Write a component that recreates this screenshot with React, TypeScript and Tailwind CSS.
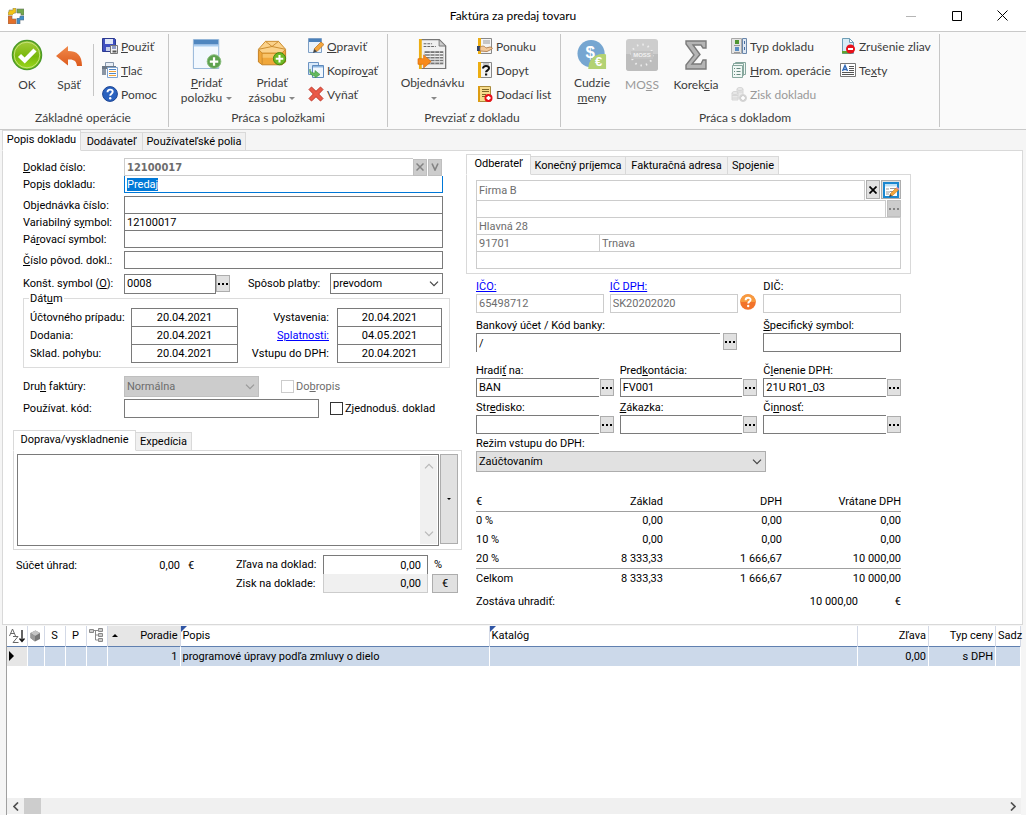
import { useEffect, useRef, type InputHTMLAttributes, type ReactNode } from 'react';
import clsx from 'clsx';

/* ---------- Icons ---------- */

const LogoIcon = () => (
    <svg width="16" height="16" viewBox="0 0 16 16">
        <path d="M1 4V2h4V0h3v5H6v2H0V4z" fill="#f2c416" stroke="#8a8a76" strokeWidth=".6" />
        <path d="M9 1h7v6h-3V5H9z" fill="#74a94c" stroke="#66755e" strokeWidth=".6" />
        <path d="M0 8h4v3h4v5H0z" fill="#e3702b" stroke="#8b6b58" strokeWidth=".6" />
        <path d="M12 8h4v4h-4v4H9v-6h3z" fill="#3f8fcb" stroke="#57707f" strokeWidth=".6" />
        <path d="M5 6h6v4H5z" fill="#fff" />
    </svg>
);

const OkIcon = () => (
    <svg width="32" height="32" viewBox="0 0 32 32">
        <defs>
            <linearGradient id="okFill" x1="0" y1="0" x2="0" y2="1">
                <stop offset="0" stopColor="#a6cc3c" />
                <stop offset=".55" stopColor="#79b80c" />
                <stop offset="1" stopColor="#9ddb1c" />
            </linearGradient>
        </defs>
        <circle cx="16" cy="16" r="14.5" fill="url(#okFill)" stroke="#4c9a2a" strokeWidth="1.5" />
        <circle cx="16" cy="16" r="12.8" fill="none" stroke="#c3e27a" strokeWidth="1" />
        <path d="M8.5 16.5l5.200 5L24 11" fill="none" stroke="#fff" strokeWidth="4.400" />
    </svg>
);

const BackIcon = () => (
    <svg width="32" height="32" viewBox="0 0 32 32">
        <defs>
            <linearGradient id="backFill" x1="0" y1="0" x2="0" y2="1">
                <stop offset="0" stopColor="#f08a4c" />
                <stop offset="1" stopColor="#dd5a1c" />
            </linearGradient>
        </defs>
        <path d="M3 17L15 7v5c9 0 14 4 14 15h-5c-.5-5-3-7-9-6.500v6z" fill="url(#backFill)" />
    </svg>
);

const SaveIcon = () => (
    <svg width="16" height="16" viewBox="0 0 16 16">
        <path d="M.5.5h12l1 1v12H.5z" fill="#3f4fc0" stroke="#2c3a8f" />
        <path d="M3 1h8v5H3z" fill="#dfe6f7" />
        <path d="M4 9h4v4H4z" fill="#c5cde8" />
        <path d="M8.500 7.500h7v8h-7z" fill="#f3f3f3" stroke="#777" />
        <path d="M10 8h4v3h-4z" fill="#8f9cc9" />
        <path d="M10.500 12.500h4v2h-4z" fill="#555" />
    </svg>
);

const PrintIcon = () => (
    <svg width="16" height="16" viewBox="0 0 16 16">
        <path d="M3.500.5h8v4h-8z" fill="#e8eef6" stroke="#8797ac" />
        <path d="M0 4h14v3H0z" fill="#6b7785" />
        <path d="M0 7h4v6H0z" fill="#8a95a3" />
        <path d="M5.500 5.500h10v10h-10z" fill="#fdfdfd" stroke="#7fa3cf" />
        <path d="M7 7.500h7M7 11.500h7" stroke="#4f86c6" />
        <path d="M7 9.500h7M7 13.500h7" stroke="#f0a33a" />
    </svg>
);

const HelpIcon = () => (
    <svg width="16" height="16" viewBox="0 0 16 16">
        <circle cx="8" cy="8" r="7.400" fill="#2a62bf" stroke="#1c4593" />
        <path d="M5.500 6.200c0-3.600 5.200-3.200 5.200-.4 0 1.800-2.500 1.900-2.500 3.900" fill="none" stroke="#fff" strokeWidth="1.900" />
        <circle cx="8.200" cy="12.200" r="1.200" fill="#fff" />
    </svg>
);

const AddItemIcon = () => (
    <svg width="32" height="32" viewBox="0 0 32 32">
        <path d="M1.500.5h27v31h-27z" fill="#f2f8fe" stroke="#8fb2d6" />
        <path d="M2 1h26v5H2z" fill="#4f86bf" />
        <path d="M2 6h26v2H2z" fill="#a9cdf0" />
        <circle cx="23.500" cy="24" r="7.300" fill="#5da24f" stroke="#8bbd80" />
        <path d="M23.500 19.500v9M19 24h9" stroke="#fff" strokeWidth="2.400" />
    </svg>
);

const AddStockIcon = () => (
    <svg width="32" height="32" viewBox="0 0 32 32">
        <path d="M1.500 12v12.500l4 3h21l4-3V12z" fill="#f0a73a" stroke="#c27d1f" />
        <path d="M1.500 11L9 2.500h14l7.500 8.500-4 4h-21z" fill="#fbd28a" stroke="#c98a2c" />
        <path d="M9 2.500l7 5.500 7-5.500M1.500 11L16 8l14.500 3M5.500 15v12" fill="none" stroke="#c98a2c" />
        <path d="M6 16h20v4H6z" fill="#f8c368" />
        <circle cx="24" cy="21" r="6.500" fill="#6fba25" stroke="#3d8410" />
        <path d="M24 17v8M20 21h8" stroke="#fff" strokeWidth="2.200" />
    </svg>
);

const EditIcon = () => (
    <svg width="16" height="16" viewBox="0 0 16 16">
        <path d="M.5.5h13v14H.5z" fill="#eaf3fc" stroke="#7d9fc5" />
        <path d="M1 1h12v3H1z" fill="#4a80ba" />
        <path d="M6 11l7-7 3 2.500-7 7z" fill="#f3a63d" stroke="#b8701c" strokeWidth=".7" />
        <path d="M6 11l3 2.500-4 1.500z" fill="#444" />
    </svg>
);

const CopyIcon = () => (
    <svg width="16" height="16" viewBox="0 0 16 16">
        <path d="M.5.5h10v12H.5z" fill="#d9e9f9" stroke="#6b93c2" />
        <path d="M4.500 3.500h11v12h-11z" fill="#f1f7fd" stroke="#5e8abd" />
        <path d="M5 4h10v1.500H5z" fill="#8db5de" />
        <path d="M2 7c0 3 2 4 5 4V8.500l5 4-5 3.500v-2c-4 0-6-3-5-7z" fill="#64b95e" stroke="#3f9440" strokeWidth=".6" />
    </svg>
);

const RemoveIcon = () => (
    <svg width="16" height="16" viewBox="0 0 16 16">
        <path d="M3.500 1L8 5.300 12.500 1 15 3.500 10.700 8l4.300 4.500-2.500 2.500L8 10.700 3.500 15 1 12.500 5.300 8 1 3.500z" fill="#ea5a48" stroke="#c23a2c" />
    </svg>
);

const OrderIcon = () => (
    <svg width="32" height="32" viewBox="0 0 32 32">
        <path d="M2.500.5h20l7 7v24h-27z" fill="#f0f0f0" stroke="#777" strokeWidth="1.400" />
        <path d="M22.500.5v7h7z" fill="#ccc" stroke="#777" />
        <path d="M1 0h3v32H1z" fill="#edae12" />
        <path d="M6 5h9M6 8h13" stroke="#666" strokeWidth="1.200" strokeDasharray="3 1" />
        <path d="M7 13h20v14H7z" fill="#777" />
        <path d="M7 15.500h20M7 18.500h20M7 21.500h20M7 24.500h20" stroke="#f4f4f4" strokeWidth="1.300" />
        <path d="M13 13v14M18 13v14M23 13v14" stroke="#ddd" strokeWidth=".8" />
        <path d="M0 21h6v-4l8 7-8 7v-4H0z" fill="#f88a1a" stroke="#d86a08" strokeWidth=".7" />
    </svg>
);

const OfferIcon = () => (
    <svg width="16" height="16" viewBox="0 0 16 16">
        <path d="M1.500.5h13v15h-13z" fill="#f4f4f4" stroke="#888" />
        <path d="M1 0h3v16H1z" fill="#edae12" />
        <path d="M6 3h7M6 5h7" stroke="#999" />
        <path d="M0 8h3v5H0z" fill="#2c4169" />
        <path d="M3 9c4-2 5 0 6 1l4-1c1.500 0 3 1 2 2l-5 2.500-7-.5z" fill="#f3c99a" stroke="#a36f3b" strokeWidth=".8" />
    </svg>
);

const DemandIcon = () => (
    <svg width="16" height="16" viewBox="0 0 16 16">
        <path d="M1.500.5h13v15h-13z" fill="#f4f4f4" stroke="#888" />
        <path d="M1 0h3v16H1z" fill="#edae12" />
        <path d="M6 2h6" stroke="#999" />
        <path d="M6 6.500C6 3 12 3.500 12 6.300c0 2-3 2-3 4" fill="none" stroke="#111" strokeWidth="2" />
        <path d="M8 11.500h2.200v2H8z" fill="#111" />
    </svg>
);

const DeliveryIcon = () => (
    <svg width="16" height="16" viewBox="0 0 16 16">
        <path d="M1.500.5h12v15h-12z" fill="#f8dc8c" stroke="#a98a3b" />
        <path d="M1 0h2v16H1z" fill="#dd9c12" />
        <path d="M5 3.500h7M5 5.500h7M5 8.500h4M5 10.500h3" stroke="#7d6628" />
        <circle cx="11.500" cy="12" r="4" fill="#e8101a" />
        <path d="M11.500 10v4M9.500 12h4" stroke="#fff" strokeWidth="1.800" />
    </svg>
);

const CurrencyIcon = () => (
    <svg width="32" height="32" viewBox="0 0 32 32" fontFamily="Liberation Sans" fontWeight="700" fill="#fff" textAnchor="middle">
        <circle cx="15" cy="15.500" r="14.500" fill="#76a6d1" />
        <text x="14" y="20" fontSize="18">$</text>
        <path d="M12 32c0-9 6-16 15-16 2 0 3 0 4 .5V32z" fill="#b3d273" />
        <text x="23" y="29" fontSize="14">€</text>
    </svg>
);

const MossIcon = () => (
    <svg width="32" height="32" viewBox="0 0 32 32">
        <rect width="32" height="32" rx="3" fill="#cdcdcd" />
        <path d="M0 15h32v14q0 3-3 3H3q-3 0-3-3z" fill="#bdbdbd" />
        <circle cx="16" cy="16" r="10.500" fill="none" stroke="#ededed" strokeWidth="2" strokeDasharray="1.500 4" />
        <path d="M5 12h22v8H5z" fill="#c3c3c3" />
        <text x="16" y="18" fontSize="6" fontWeight="700" fill="#f1f1f1" textAnchor="middle" fontFamily="Liberation Sans">MOSS</text>
    </svg>
);

const SigmaIcon = () => (
    <svg width="32" height="32" viewBox="0 0 32 32">
        <path d="M6 2h20v7h-3l-2-3h-8l7 9.500L12 25h9l2-4h3v9H6v-4l8-10L6 5z" fill="#b5b5b5" stroke="#7b7b7b" strokeWidth="1.400" />
    </svg>
);

const DocTypeIcon = () => (
    <svg width="16" height="16" viewBox="0 0 16 16">
        <path d="M.5.500h10v15H.5z" fill="#e4e4e4" stroke="#a9a9a9" />
        <path d="M4 2h4v4H4z" fill="#4f9530" />
        <path d="M4 9h4v4H4z" fill="#5a8ec4" />
        <path d="M3 7.500h6M3 14.500h6" stroke="#999" />
        <path d="M11.500.500h4v15h-4z" fill="#dfe8f3" stroke="#6a87ab" />
        <path d="M13.500 3v3M13.500 9v3" stroke="#476ea0" />
    </svg>
);

const BulkIcon = () => (
    <svg width="16" height="16" viewBox="0 0 16 16" fill="#f0f7f4" stroke="#86a79d">
        <path d="M4.500.500h10v12h-10z" />
        <path d="M2.500 1.500h10v12h-10z" />
        <path d="M1.500 3.500h10v12h-10z" />
        <path d="M3 6.500h1M5.500 6.500h4M3 9.500h1M5.500 9.500h4M3 12.500h1M5.500 12.500h4" stroke="#66887e" />
    </svg>
);

const ProfitIcon = () => (
    <svg width="16" height="16" viewBox="0 0 16 16" fill="#e9e9e9" stroke="#d6d6d6">
        <path d="M6 3v9h6V3z" />
        <ellipse cx="9" cy="3" rx="3" ry="1.500" />
        <path d="M1 7v7h6V7z" />
        <ellipse cx="4" cy="7" rx="3" ry="1.500" />
        <path d="M1 9.500h6M1 12h6M6 6h6" />
        <circle cx="12" cy="12" r="3.500" fill="#d0d0d0" />
        <path d="M12 10v4M10 12h4" stroke="#fff" strokeWidth="1.500" />
    </svg>
);

const NoDiscountIcon = () => (
    <svg width="16" height="16" viewBox="0 0 16 16">
        <path d="M2.500.500h7l4 4v11h-11z" fill="#d8ebf5" stroke="#6d9db5" />
        <path d="M9.500.500v4h4z" fill="#fff" stroke="#6d9db5" />
        <path d="M2 13h9v2.500H2z" fill="#5fa32f" />
        <circle cx="10.500" cy="11" r="4.500" fill="#e8101a" />
        <path d="M8 11h5" stroke="#fff" strokeWidth="2" />
    </svg>
);

const TextsIcon = () => (
    <svg width="16" height="16" viewBox="0 0 16 16">
        <path d="M.500 1.500h15v13H.500z" fill="#fff" stroke="#777" />
        <path d="M2.500 9L5 3.500 7.500 9M3.500 7.500h3" fill="none" stroke="#2c66b5" strokeWidth="1.400" />
        <path d="M9 4.500h5M9 6.500h5M9 8.500h5M2 10.500h12M2 12.500h12" stroke="#555" />
    </svg>
);

const FormEditIcon = () => (
    <svg width="16" height="16" viewBox="0 0 16 16" className="shrink-0">
        <path d="M1 1h14v14H1z" fill="#fff" stroke="#1b87cf" strokeWidth="2" />
        <path d="M2 2h12v2.500H2z" fill="#bfe0f5" />
        <path d="M3 7h3M7 6.500h6v3H7M3 10h4M3 12h3" fill="none" stroke="#999" />
        <path d="M7 12l6-6 2.500 2-6.500 6z" fill="#f3a63d" stroke="#c27d1f" strokeWidth=".6" />
        <path d="M13 6l1-1 2.500 2-1 1z" fill="#e289b4" />
        <path d="M6 15l1-3 2 2z" fill="#444" />
    </svg>
);

const InfoIcon = () => (
    <svg width="16" height="16" viewBox="0 0 16 16" className="shrink-0">
        <circle cx="8" cy="8" r="7.800" fill="#f2732b" />
        <path d="M8 .200a7.800 7.800 0 017.800 7.800H.200A7.800 7.800 0 018 .200z" fill="#f79a3f" />
        <path d="M5.600 6.200c0-3.400 5-3 5-.4 0 1.700-2.400 1.800-2.400 3.700" fill="none" stroke="#fff" strokeWidth="1.900" />
        <circle cx="8.200" cy="12" r="1.200" fill="#fff" />
    </svg>
);

const Chevron = ({ className }: { className?: string }) => (
    <svg width="10" height="6" viewBox="0 0 10 6" className={className}>
        <path d="M1 .7l4 4 4-4" fill="none" stroke="currentColor" strokeWidth="1.200" />
    </svg>
);

/* ---------- Ribbon ---------- */

function BigButton({ icon, className, disabled, children }: { icon: ReactNode; className?: string; disabled?: boolean; children: ReactNode }) {
    return (
        <button disabled={disabled} className={clsx('flex flex-col items-center pt-[5px] shrink-0 leading-[15px] whitespace-nowrap disabled:text-[#999]', className)}>
            {icon}
            <span className="mt-[6px]">{children}</span>
        </button>
    );
}

function SmallButton({ icon, disabled, children }: { icon: ReactNode; disabled?: boolean; children: ReactNode }) {
    return (
        <button disabled={disabled} className="flex h-6 items-center gap-[3px] whitespace-nowrap disabled:text-[#999]">
            {icon}
            <span>{children}</span>
        </button>
    );
}

function RibbonGroup({ title, className, children }: { title: string; className: string; children: ReactNode }) {
    return (
        <section className={clsx('flex shrink-0 flex-col border-r border-[#c6c6c6]', className)}>
            <div className="flex h-[71px]">{children}</div>
            <h2 className="mt-1 text-center leading-[18px]">{title}</h2>
        </section>
    );
}

const DropMark = () => <span className="ml-1 inline-block border-x-[3px] border-t-[3px] border-x-transparent border-t-[#888] align-middle" />;

function Ribbon() {
    return (
        <div className="flex overflow-hidden border-y border-[#c9c9c9] bg-[#fafafa] pt-[2px] pb-0.5 pl-0.5 font-['Lato','Open_Sans',sans-serif] text-[12px] text-[#3c3c3c]">
            <RibbonGroup title="Základné operácie" className="w-[167px] pr-1">
                <BigButton icon={<OkIcon />} className="w-[50px]">OK</BigButton>
                <BigButton icon={<BackIcon />} className="w-[34px]">Späť</BigButton>
                <div className="mr-2 ml-[7px] mt-[10px] h-[52px] w-px bg-[#c6c6c6]" />
                <div>
                    <SmallButton icon={<SaveIcon />}><u>P</u>oužiť</SmallButton>
                    <SmallButton icon={<PrintIcon />}><u>T</u>lač</SmallButton>
                    <SmallButton icon={<HelpIcon />}>Pomoc</SmallButton>
                </div>
            </RibbonGroup>
            <RibbonGroup title="Práca s položkami" className="w-[219px] pr-1 pl-1">
                <BigButton icon={<AddItemIcon />} className="w-[67px]"><u>P</u>ridať<br />položku<DropMark /></BigButton>
                <BigButton icon={<AddStockIcon />} className="w-[64px]">Pridať<br />zásobu<DropMark /></BigButton>
                <div className="ml-1">
                    <SmallButton icon={<EditIcon />}><u>O</u>praviť</SmallButton>
                    <SmallButton icon={<CopyIcon />}>Kopíro<u>v</u>ať</SmallButton>
                    <SmallButton icon={<RemoveIcon />}>Vyňať</SmallButton>
                </div>
            </RibbonGroup>
            <RibbonGroup title="Prevziať z dokladu" className="w-[173px] pr-1">
                <BigButton icon={<OrderIcon />} className="w-[89px]">Objednávku<br /><DropMark /></BigButton>
                <div>
                    <SmallButton icon={<OfferIcon />}>Ponuku</SmallButton>
                    <SmallButton icon={<DemandIcon />}>Dopyt</SmallButton>
                    <SmallButton icon={<DeliveryIcon />}>Dodací list</SmallButton>
                </div>
            </RibbonGroup>
            <RibbonGroup title="Práca s dokladom" className="w-[379px] pr-4 pl-[6px]">
                <BigButton icon={<CurrencyIcon />} className="w-[50px]">Cudzie<br /><u>m</u>eny</BigButton>
                <BigButton icon={<MossIcon />} className="w-[50px]" disabled>MO<u>S</u>S</BigButton>
                <BigButton icon={<SigmaIcon />} className="w-[58px]">Korek<u>c</u>ia</BigButton>
                <div className="ml-[6px] w-[109px] shrink-0">
                    <SmallButton icon={<DocTypeIcon />}>Typ dokladu</SmallButton>
                    <SmallButton icon={<BulkIcon />}><u>H</u>rom. operácie</SmallButton>
                    <SmallButton icon={<ProfitIcon />} disabled>Zisk dokladu</SmallButton>
                </div>
                <div>
                    <SmallButton icon={<NoDiscountIcon />}>Zrušenie zliav</SmallButton>
                    <SmallButton icon={<TextsIcon />}>Te<u>x</u>ty</SmallButton>
                </div>
            </RibbonGroup>
        </div>
    );
}

/* ---------- Form controls ---------- */

function Tabs({ items }: { items: { label: string; width: string }[] }) {
    return (
        <div role="tablist" className="relative z-10 -mb-px flex h-[21px] items-end">
            {items.map((item, i) => (
                <button
                    key={item.label}
                    role="tab"
                    aria-selected={i === 0}
                    className={clsx(
                        'border border-[#d9d9d9] whitespace-nowrap',
                        item.width,
                        i === 0 ? 'h-[21px] border-b-white bg-white pb-0.5' : 'h-[19px] border-l-0 bg-[#f0f0f0]',
                    )}
                >
                    {item.label}
                </button>
            ))}
        </div>
    );
}

function TextInput({ className, ...rest }: InputHTMLAttributes<HTMLInputElement>) {
    return <input className={clsx('min-w-0 border px-0.5 outline-none', rest.disabled ? 'border-[#cccccc] bg-white text-[#6d6d6d]' : 'border-[#7a7a7a] bg-white', className)} {...rest} />;
}

function Dots({ label, disabled }: { label: string; disabled?: boolean }) {
    return (
        <button
            aria-label={label}
            disabled={disabled}
            className={clsx('flex h-[17px] w-[14px] shrink-0 items-center justify-center gap-0.5 border', disabled ? 'border-[#bfbfbf] bg-[#cccccc] text-[#838383]' : 'border-[#adadad] bg-[#e1e1e1] text-black')}
        >
            <i className="size-0.5 bg-current" />
            <i className="size-0.5 bg-current" />
            <i className="size-0.5 bg-current" />
        </button>
    );
}

function Select({ id, value, className, arrow, disabled }: { id: string; value: string; className?: string; arrow?: string; disabled?: boolean }) {
    return (
        <div className={clsx('relative', className)}>
            <select id={id} disabled={disabled} className="size-full appearance-none border border-inherit bg-inherit px-0.5 opacity-100 outline-none">
                <option>{value}</option>
            </select>
            <Chevron className={clsx('pointer-events-none absolute top-2 right-1', arrow ?? 'text-[#444]')} />
        </div>
    );
}

function FormRow({ id, label, className, children }: { id: string; label: ReactNode; className?: string; children: ReactNode }) {
    return (
        <div className={clsx('flex items-center', className)}>
            <label htmlFor={id} className="w-[101px] shrink-0 whitespace-nowrap">{label}</label>
            {children}
        </div>
    );
}

function DateStack({ rows, labelWidth, inputWidth }: { rows: { id: string; label: ReactNode; value: string }[]; labelWidth: string; inputWidth: string }) {
    return (
        <div>
            {rows.map((row) => (
                <div key={row.id} className="-mt-px flex h-[19px] items-center">
                    <label htmlFor={row.id} className={clsx('whitespace-nowrap', labelWidth)}>{row.label}</label>
                    <TextInput id={row.id} defaultValue={row.value} className={clsx('h-[19px] text-center', inputWidth)} />
                </div>
            ))}
        </div>
    );
}

/* ---------- Left half ---------- */

function DocumentForm() {
    const nameRef = useRef<HTMLInputElement>(null);

    useEffect(() => {
        nameRef.current?.focus();
        nameRef.current?.select();
    }, []);

    return (
        <div className="w-[459px] shrink-0 pt-[7px] pl-[10px]">
            <div className="pl-[10px]">
                <FormRow id="docNo" label={<><u>D</u>oklad číslo:</>} className="h-[18px]">
                    <TextInput id="docNo" disabled defaultValue="12100017" className="h-[18px] w-[289px] border-r-0 font-['DejaVu_Sans_Condensed','DejaVu_Sans',sans-serif] font-bold" />
                    <button disabled aria-label="Vymazať" className="flex h-[17px] w-[14px] items-center justify-center border border-[#bfbfbf] bg-[#cccccc] text-[#838383]">
                        <svg width="8" height="8" viewBox="0 0 8 8"><path d="M.500.500l7 7M7.500.500l-7 7" stroke="currentColor" strokeWidth="1.500" /></svg>
                    </button>
                    <button disabled aria-label="Vybrať" className="ml-px flex h-[17px] w-[14px] items-center justify-center border border-[#bfbfbf] bg-[#cccccc] text-[#838383]">
                        <svg width="8" height="8" viewBox="0 0 8 8"><path d="M1 .500L4 7l3-6.500" fill="none" stroke="currentColor" strokeWidth="1.600" /></svg>
                    </button>
                </FormRow>
                <FormRow id="docName" label={<>Pop<u>i</u>s dokladu:</>} className="h-[17px]">
                    <input ref={nameRef} id="docName" defaultValue="Predaj" className="h-[17px] w-[319px] border border-t-0 border-[#0078d7] px-0.5 outline-none selection:bg-[#0078d7] selection:text-white" />
                </FormRow>
                <FormRow id="orderNo" label={<>Ob<u>j</u>ednávka číslo:</>} className="mt-[3px] h-[18px]">
                    <TextInput id="orderNo" className="h-[18px] w-[319px]" />
                </FormRow>
                <FormRow id="varSym" label={<>Variabilný s<u>y</u>mbol:</>} className="-mt-px h-[18px]">
                    <TextInput id="varSym" defaultValue="12100017" className="h-[18px] w-[319px]" />
                </FormRow>
                <FormRow id="pairSym" label={<>Pá<u>r</u>ovací symbol:</>} className="-mt-px h-[18px]">
                    <TextInput id="pairSym" className="h-[18px] w-[319px]" />
                </FormRow>
                <FormRow id="origNo" label={<><u>Č</u>íslo pôvod. dokl.:</>} className="mt-[3px] h-[18px]">
                    <TextInput id="origNo" className="h-[18px] w-[319px]" />
                </FormRow>
                <FormRow id="constSym" label={<>Konšt. symbol (<u>O</u>):</>} className="mt-1 h-[21px]">
                    <TextInput id="constSym" defaultValue="0008" className="h-5 w-[92px]" />
                    <Dots label="Vybrať konštantný symbol" />
                    <label htmlFor="payment" className="ml-[18px] w-[82px] whitespace-nowrap">Spôsob platby:</label>
                    <Select id="payment" value="prevodom" className="h-[21px] w-[113px] border-[#7a7a7a] bg-white" />
                </FormRow>
            </div>

            <fieldset className="relative mt-1 ml-[10px] flex h-[70px] w-[427px] justify-between border border-[#dcdcdc] pt-[10px] pr-[7px] pl-[6px]">
                <legend className="absolute -top-[7px] left-[5px] bg-white px-px leading-[14px]">Dát<u>u</u>m</legend>
                <DateStack
                    labelWidth="w-[101px]"
                    inputWidth="w-[107px]"
                    rows={[
                        { id: 'd1', label: 'Účtovného prípadu:', value: '20.04.2021' },
                        { id: 'd2', label: 'Dodania:', value: '20.04.2021' },
                        { id: 'd3', label: 'Sklad. pohybu:', value: '20.04.2021' },
                    ]}
                />
                <DateStack
                    labelWidth="w-[86px] pr-[8px] text-right"
                    inputWidth="w-[105px]"
                    rows={[
                        { id: 'd4', label: 'Vystavenia:', value: '20.04.2021' },
                        { id: 'd5', label: <a href="#splatnost" className="text-[#0000ff] underline">Splatnosti:</a>, value: '04.05.2021' },
                        { id: 'd6', label: 'Vstupu do DPH:', value: '20.04.2021' },
                    ]}
                />
            </fieldset>

            <div className="mt-2 pl-[10px]">
                <FormRow id="kind" label={<>Dru<u>h</u> faktúry:</>} className="h-[21px]">
                    <Select id="kind" value="Normálna" disabled arrow="text-[#999]" className="h-[21px] w-[135px] border-[#bfbfbf] bg-[#cccccc] text-[#6d6d6d]" />
                    <label className="ml-[22px] flex items-center gap-0.5 text-[#6d6d6d]">
                        <input type="checkbox" disabled className="size-[13px] appearance-none border border-[#cccccc] bg-white" />
                        <span>Do<u>b</u>ropis</span>
                    </label>
                </FormRow>
                <FormRow id="userCode" label="Používat. kód:" className="mt-0.5 h-[19px]">
                    <TextInput id="userCode" className="h-[19px] w-[195px]" />
                    <label className="ml-[11px] flex items-center gap-0.5">
                        <input type="checkbox" className="size-[13px] appearance-none border border-[#333] bg-white" />
                        Zjednoduš. doklad
                    </label>
                </FormRow>
            </div>

            <div className="mt-3 w-[449px]">
                <Tabs items={[{ label: 'Doprava/vyskladnenie', width: 'w-[123px]' }, { label: 'Expedícia', width: 'w-[56px]' }]} />
                <div className="flex gap-px border border-[#d9d9d9] p-[3px]">
                    <div className="flex h-[92px] flex-1 border border-[#7a7a7a] p-px">
                        <textarea aria-label="Doprava/vyskladnenie" className="flex-1 resize-none outline-none" />
                        <div className="flex w-[17px] flex-col items-center justify-between bg-[#f0f0f0] py-[7px] text-[#b8b8b8]">
                            <Chevron className="rotate-180" />
                            <Chevron />
                        </div>
                    </div>
                    <button aria-label="Ďalšie možnosti" className="flex h-[90px] w-[18px] items-center justify-center border border-[#adadad] bg-[#e1e1e1]">
                        <span className="border-x-2 border-t-2 border-x-transparent border-t-black" />
                    </button>
                </div>
            </div>

            <div className="mt-[5px] flex pl-[3px]">
                <div className="flex h-5 w-[220px] items-center">
                    <span className="w-[116px]">Súčet úhrad:</span>
                    <output className="w-12 text-right">0,00</output>
                    <span className="ml-2">€</span>
                </div>
                <div>
                    <div className="flex h-[19px] items-center">
                        <label htmlFor="discount" className="w-[87px]">Zľava na doklad:</label>
                        <TextInput id="discount" defaultValue="0,00" className="h-[19px] w-[105px] border-b-0 px-[6px] text-right" />
                        <span className="ml-[6px]">%</span>
                    </div>
                    <div className="flex h-[19px] items-center">
                        <label htmlFor="profit" className="w-[87px]">Zisk na doklade:</label>
                        <input id="profit" readOnly defaultValue="0,00" className="h-[19px] w-[105px] border border-t-0 border-[#cccccc] bg-[#f0f0f0] px-[6px] text-right outline-none" />
                        <button className="ml-1 h-[19px] w-[26px] border border-[#adadad] bg-[#e1e1e1]">€</button>
                    </div>
                </div>
            </div>
        </div>
    );
}

/* ---------- Right half ---------- */

const pickers = [
    { id: 'payTo', label: <>Hradi<u>ť</u> na:</>, value: 'BAN' },
    { id: 'precont', label: <>Pred<u>k</u>ontácia:</>, value: 'FV001' },
    { id: 'vatClass', label: <>Č<u>l</u>enenie DPH:</>, value: '21U R01_03' },
    { id: 'center', label: <>Str<u>e</u>disko:</>, value: '' },
    { id: 'job', label: <><u>Z</u>ákazka:</>, value: '' },
    { id: 'activity', label: <>Či<u>n</u>nosť:</>, value: '' },
];

const vatRows = [
    ['0 %', '0,00', '0,00', '0,00'],
    ['10 %', '0,00', '0,00', '0,00'],
    ['20 %', '8 333,33', '1 666,67', '10 000,00'],
];

function CustomerForm() {
    return (
        <div className="max-w-[449px] flex-1 pt-[3px] pl-1">
            <Tabs
                items={[
                    { label: 'Odberateľ', width: 'w-[65px]' },
                    { label: 'Konečný príjemca', width: 'w-[95px]' },
                    { label: 'Fakturačná adresa', width: 'w-[102px]' },
                    { label: 'Spojenie', width: 'w-[51px]' },
                ]}
            />
            <div className="border border-[#d9d9d9] px-[9px] pt-[5px] pb-1">
                <div className="flex h-[21px] items-start gap-px">
                    <TextInput aria-label="Firma" disabled defaultValue="Firma B" className="h-[21px] flex-1" />
                    <button aria-label="Vymazať" className="flex h-[19px] w-[14px] items-center justify-center border border-[#adadad] bg-[#e1e1e1]">
                        <svg width="8" height="8" viewBox="0 0 8 8"><path d="M.500.500l7 7M7.500.500l-7 7" stroke="#000" strokeWidth="1.700" /></svg>
                    </button>
                    <button aria-label="Upraviť firmu" className="flex h-[19px] w-5 items-center justify-center border border-[#adadad] bg-[#e1e1e1]"><FormEditIcon /></button>
                </div>
                <div className="-mt-px flex h-[18px] gap-px">
                    <TextInput aria-label="Kontakt" disabled className="flex-1" />
                    <Dots label="Vybrať kontakt" disabled />
                </div>
                <TextInput aria-label="Ulica" disabled defaultValue="Hlavná 28" className="-mt-px block h-[18px] w-full" />
                <div className="-mt-px flex h-[18px]">
                    <TextInput aria-label="PSČ" disabled defaultValue="91701" className="w-[123px] border-r-0" />
                    <TextInput aria-label="Mesto" disabled defaultValue="Trnava" className="flex-1" />
                </div>
                <TextInput aria-label="Štát" disabled className="-mt-px block h-[18px] w-full" />
            </div>

            <div className="mt-[5px] mr-[10px] ml-[10px]">
                <div className="grid grid-cols-3 gap-x-[6px]">
                    <div>
                        <label htmlFor="ico" className="block leading-[15px]"><a href="#ico" className="text-[#0000ff] underline">IČO:</a></label>
                        <TextInput id="ico" disabled defaultValue="65498712" className="block h-[19px] w-[128px]" />
                    </div>
                    <div className="-ml-[10px]">
                        <label htmlFor="icdph" className="block leading-[15px]"><a href="#icdph" className="text-[#0000ff] underline">IČ DPH:</a></label>
                        <div className="flex gap-0.5">
                            <TextInput id="icdph" disabled defaultValue="SK20202020" className="h-[19px] w-[128px]" />
                            <InfoIcon />
                        </div>
                    </div>
                    <div>
                        <label htmlFor="dic" className="block leading-[15px]">DIČ:</label>
                        <TextInput id="dic" disabled className="block h-[19px] w-full" />
                    </div>
                    <div className="col-span-2 mt-[5px]">
                        <label htmlFor="bank" className="block leading-[15px]">Bankový účet / Kód banky:</label>
                        <div className="flex pr-5">
                            <TextInput id="bank" defaultValue="/" className="mr-[3px] h-[19px] flex-1 border-r-0 border-b-0" />
                            <Dots label="Vybrať účet" />
                        </div>
                    </div>
                    <div className="mt-[5px]">
                        <label htmlFor="specSym" className="block leading-[15px]"><u>Š</u>pecifický symbol:</label>
                        <TextInput id="specSym" className="block h-[19px] w-full" />
                    </div>
                </div>

                <div className="mt-[11px] grid grid-cols-3 gap-x-[6px] gap-y-[3px]">
                    {pickers.map((p) => (
                        <div key={p.id}>
                            <label htmlFor={p.id} className="block leading-[15px]">{p.label}</label>
                            <div className="flex items-center gap-px">
                                <TextInput id={p.id} defaultValue={p.value} className="h-[19px] flex-1 border-r-0" />
                                <Dots label="Vybrať" />
                            </div>
                        </div>
                    ))}
                </div>

                <label htmlFor="vatMode" className="mt-[2px] block leading-[15px]">Režim vstupu do DPH:</label>
                <Select id="vatMode" value="Zaúčtovaním" className="h-[21px] w-[290px] border-[#adadad] bg-[#e1e1e1]" />

                <table className="mt-5 w-full text-right">
                    <thead>
                        <tr className="h-[19px] border-b border-[#a0a0a0]">
                            <th className="w-[60px] text-left font-normal">€</th>
                            <th className="font-normal">Základ</th>
                            <th className="w-[119px] font-normal">DPH</th>
                            <th className="w-[119px] font-normal">Vrátane DPH</th>
                        </tr>
                    </thead>
                    <tbody>
                        {vatRows.map((row) => (
                            <tr key={row[0]} className="h-[19px]">
                                {row.map((cell, i) => (
                                    <td key={i} className={i === 0 ? 'text-left' : ''}>{cell}</td>
                                ))}
                            </tr>
                        ))}
                    </tbody>
                    <tfoot>
                        <tr className="h-[21px] border-t border-[#a0a0a0]">
                            <td className="text-left">Celkom</td>
                            <td>8 333,33</td>
                            <td>1 666,67</td>
                            <td>10 000,00</td>
                        </tr>
                    </tfoot>
                </table>
                <div className="mt-[3px] flex h-[19px] items-center">
                    <span className="flex-1">Zostáva uhradiť:</span>
                    <output>10 000,00</output>
                    <span className="w-[43px] text-right">€</span>
                </div>
            </div>
        </div>
    );
}

/* ---------- Items grid ---------- */

const ColumnMark = () => <span className="absolute top-0 left-0 border-t-[6px] border-r-[6px] border-t-[#2f55a4] border-r-transparent" />;

function ItemsGrid() {
    return (
        <div className="flex flex-1 flex-col border-l border-[#a0a0a0] bg-white">
            <table className="w-full table-fixed">
                <thead>
                    <tr className="h-[20px] border-b border-[#6080b0] [&>th]:relative [&>th]:border-r [&>th]:border-[#d3d9e6] [&>th]:px-0.5 [&>th]:py-0 [&>th]:font-normal [&>th]:whitespace-nowrap">
                        <th className="w-5">
                            <svg width="16" height="16" viewBox="0 0 16 16" fill="none" stroke="#666" aria-label="Zoradiť">
                                <path d="M.500 8L3.500 1l3 7M1.500 5.500h4M4 8.500h5l-5 6h5.500" />
                                <path d="M13 2v11M10.500 10.500l2.500 3 2.500-3" stroke="#111" strokeWidth="1.300" />
                            </svg>
                        </th>
                        <th className="w-[17px]">
                            <svg width="11" height="12" viewBox="0 0 11 12" className="mx-auto" aria-label="Stav">
                                <path d="M5.500.500L10 3v6l-5 2.500L.500 8V3z" fill="#777" />
                                <path d="M5.500.500L10 3 5 6 .500 3z" fill="#c4c4c4" />
                                <path d="M5 6v5.500L.500 8V3z" fill="#999" />
                            </svg>
                        </th>
                        <th className="w-[21px]">S</th>
                        <th className="w-[21px]">P</th>
                        <th className="w-[21px]">
                            <svg width="15" height="15" viewBox="0 0 15 15" fill="#ccc" stroke="#888" aria-label="Strom">
                                <path d="M.500 1.500h4v3h-4zM9.500.500h4v3h-4zM9.500 5.500h4v3h-4zM9.500 10.500h4v3h-4z" />
                                <path d="M4.500 2.500h5M6.500 2.500v9.500h3M6.500 7h3" fill="none" />
                            </svg>
                        </th>
                        <th className="w-[73px] bg-[#e6e6e6] text-right">
                            <span className="absolute top-2 left-1 border-x-[3px] border-b-[3px] border-x-transparent border-b-black" />
                            Poradie
                        </th>
                        <th className="w-[309px] text-left"><ColumnMark />Popis</th>
                        <th className="text-left"><ColumnMark />Katalóg</th>
                        <th className="w-[71px] text-right">Zľava</th>
                        <th className="w-[67px] text-right">Typ ceny</th>
                        <th className="w-[25px] text-left">Sadz</th>
                    </tr>
                </thead>
                <tbody>
                    <tr className="h-[20px] bg-[#ccd9ea] [&>td]:border-r [&>td]:border-white [&>td]:px-0.5">
                        <td className="bg-[#e6e6e6]">
                            <svg width="5" height="10" viewBox="0 0 5 10"><path d="M0 0l5 5-5 5z" /></svg>
                        </td>
                        <td />
                        <td />
                        <td />
                        <td />
                        <td className="text-right">1</td>
                        <td>programové úpravy podľa zmluvy o dielo</td>
                        <td />
                        <td className="text-right">0,00</td>
                        <td className="text-right">s DPH</td>
                        <td />
                    </tr>
                </tbody>
            </table>
            <div className="mt-auto mb-px flex h-4 items-center bg-[#f0f0f0] text-[#505050]">
                <button aria-label="Posunúť doľava" className="flex w-[17px] justify-center">
                    <svg width="6" height="9" viewBox="0 0 6 9"><path d="M5 .500l-4 4 4 4" fill="none" stroke="currentColor" strokeWidth="1.700" /></svg>
                </button>
                <div className="h-full w-[17px] bg-[#cdcdcd]" />
                <button aria-label="Posunúť doprava" className="ml-auto flex w-[17px] justify-center">
                    <svg width="6" height="9" viewBox="0 0 6 9"><path d="M1 .500l4 4-4 4" fill="none" stroke="currentColor" strokeWidth="1.700" /></svg>
                </button>
            </div>
        </div>
    );
}

export default function App() {
    return (
        <div className="flex min-h-screen flex-col bg-[#f5f5f5] font-['Roboto','Noto_Sans',sans-serif] text-[11px] leading-[15px] text-black">
            <header className="flex h-[31px] items-center bg-white pr-[18px] pl-2 font-['Lato','Open_Sans',sans-serif] text-[12px]">
                <div className="w-[112px]"><LogoIcon /></div>
                <h1 className="flex-1 text-center">Faktúra za predaj tovaru</h1>
                <div className="flex w-[102px] items-center justify-between">
                    <button aria-label="Minimalizovať"><svg width="10" height="10" viewBox="0 0 10 10"><path d="M0 5.500h10" stroke="#b5b5b5" /></svg></button>
                    <button aria-label="Maximalizovať"><svg width="10" height="10" viewBox="0 0 10 10"><path d="M.500.500h9v9h-9z" fill="none" stroke="#000" /></svg></button>
                    <button aria-label="Zavrieť"><svg width="11" height="11" viewBox="0 0 11 11"><path d="M.500.500l10 10M10.500.500l-10 10" stroke="#000" /></svg></button>
                </div>
            </header>
            <Ribbon />

            <main className="flex flex-1 flex-col">
                <div className="pl-0.5">
                    <Tabs items={[{ label: 'Popis dokladu', width: 'w-[79px]' }, { label: 'Dodávateľ', width: 'w-[62px]' }, { label: 'Používateľské polia', width: 'w-[103px]' }]} />
                    <div className="mr-[3px] flex min-h-[475px] border border-[#d9d9d9] bg-white">
                        <DocumentForm />
                        <CustomerForm />
                    </div>
                </div>
                <div className="flex flex-1 pr-[5px] pl-[6px] pt-px">
                    <ItemsGrid />
                </div>
            </main>
        </div>
    );
}
